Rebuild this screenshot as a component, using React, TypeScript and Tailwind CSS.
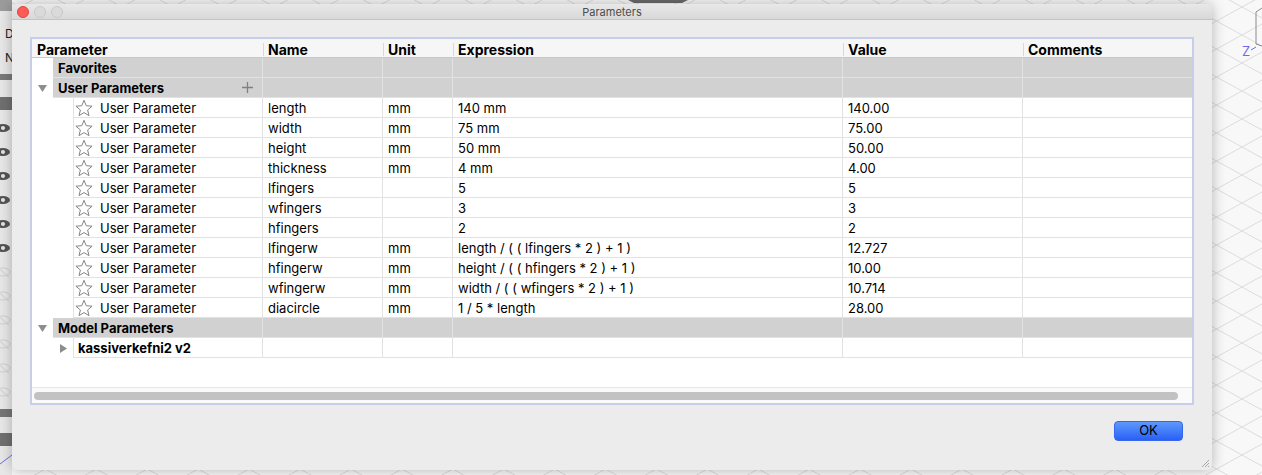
import React from 'react';

const params = [
  ['length', 'mm', '140 mm', '140.00'],
  ['width', 'mm', '75 mm', '75.00'],
  ['height', 'mm', '50 mm', '50.00'],
  ['thickness', 'mm', '4 mm', '4.00'],
  ['lfingers', '', '5', '5'],
  ['wfingers', '', '3', '3'],
  ['hfingers', '', '2', '2'],
  ['lfingerw', 'mm', 'length / ( ( lfingers * 2 ) + 1 )', '12.727'],
  ['hfingerw', 'mm', 'height / ( ( hfingers * 2 ) + 1 )', '10.00'],
  ['wfingerw', 'mm', 'width / ( ( wfingers * 2 ) + 1 )', '10.714'],
  ['diacircle', 'mm', '1 / 5 * length', '28.00'],
];

const headers: [string, string][] = [
  ['Name', 'w-[120px]'],
  ['Unit', 'w-[70px]'],
  ['Expression', 'w-[390px]'],
  ['Value', 'w-[180px]'],
];

const cell = 'flex h-full shrink-0 items-center overflow-hidden whitespace-nowrap border-r border-[#e2e2e2] pt-[2px]';

const Down = () => (
  <svg width="9" height="7" viewBox="0 0 9 7">
    <polygon points="0,0 9,0 4.5,7" fill="#8d8d8d" />
  </svg>
);

const Right = () => (
  <svg width="7" height="9" viewBox="0 0 7 9">
    <polygon points="0,0 7,4.5 0,9" fill="#8d8d8d" />
  </svg>
);

const Star = () => (
  <svg width="18" height="18" viewBox="0 0 18 18" className="mt-[-2px] shrink-0">
    <polygon
      points="9,1.3 11.23,6.73 17.08,7.17 12.61,10.97 14,16.68 9,13.6 4,16.68 5.39,10.97 0.92,7.17 6.77,6.73"
      fill="none"
      stroke="#868686"
      strokeWidth="1"
      strokeLinejoin="round"
    />
  </svg>
);

const Tail = ({ name = '', unit = '', expr = '', value = '' }) => (
  <>
    <div className={`${cell} w-[120px] pl-[5px]`}>{name}</div>
    <div className={`${cell} w-[70px] pl-[5px]`}>{unit}</div>
    <div className={`${cell} w-[390px] pl-[5px]`}>{expr}</div>
    <div className={`${cell} w-[180px] pl-[5px]`}>{value}</div>
    <div className="flex-1" />
  </>
);

const GroupRow = ({ label, open, plus }: { label: string; open?: boolean; plus?: boolean }) => (
  <div className="flex h-5">
    <div className="flex w-[21px] shrink-0 items-center justify-center">{open && <Down />}</div>
    <div className="flex flex-1 border-b border-[#e2e2e2] bg-[#d1d1d1] font-bold">
      <div className={`${cell} w-[210px] justify-between pl-[5px] pr-[9px]`}>
        <span>{label}</span>
        {plus && (
          <svg width="11" height="11" viewBox="0 0 11 11" className="mt-[-2px]">
            <path d="M5.5 0v11M0 5.5h11" stroke="#808080" strokeWidth="1.3" />
          </svg>
        )}
      </div>
      <Tail />
    </div>
  </div>
);

const Desktop = () => {
  const lines = Array.from({ length: 90 }, (_, i) => -900 + i * 28);
  return (
    <svg className="absolute inset-0" width="1262" height="475">
      <rect width="1262" height="475" fill="#f8f8f8" />
      {lines.map((c) => (
        <g key={c} stroke="#dcdcdc" strokeWidth="1">
          <line x1="0" y1={c} x2="1262" y2={c + 694} />
          <line x1="0" y1={c + 694} x2="1262" y2={c} />
        </g>
      ))}
      <path d="M628 0h60l-6 3h-48z" fill="#6a6a6a" />
      <path d="M1256 12l6-4M1256 12v32l6 2" stroke="#8a8a8a" fill="none" />
      <text x="1242" y="56" fill="#6b6bf2" fontSize="13" fontFamily="Inter, sans-serif">Z</text>
      <path d="M1251 50l5-3" stroke="#6b6bf2" />
      {/* app side strip */}
      <rect x="0" y="0" width="12" height="475" fill="#e8e8e8" />
      <rect x="0" y="0" width="12" height="11" fill="#9c9c9c" />
      <text x="5" y="38" fontSize="12" fontFamily="Inter, sans-serif" fill="#222">D</text>
      <text x="5" y="62" fontSize="12" fontFamily="Inter, sans-serif" fill="#222">N</text>
      <rect x="0" y="74" width="12" height="6" fill="#7a7a7a" />
      <rect x="0" y="97" width="12" height="13" fill="#707070" />
      {[128, 152, 176, 200, 224, 248].map((y) => (
        <g key={y}>
          <ellipse cx="3" cy={y} rx="7" ry="4" fill="#555" />
          <circle cx="3" cy={y} r="2" fill="#e8e8e8" />
        </g>
      ))}
      {[272, 296, 320, 344, 368, 392].map((y) => (
        <g key={y} stroke="#cfcfcf" fill="none">
          <ellipse cx="3" cy={y} rx="7" ry="4" />
          <line x1="-3" y1={y - 5} x2="9" y2={y + 5} />
        </g>
      ))}
      <rect x="0" y="409" width="12" height="8" fill="#777" />
      <rect x="0" y="433" width="12" height="13" fill="#707070" />
      <line x1="0" y1="464" x2="12" y2="455" stroke="#6b6bf2" />
    </svg>
  );
};

export default function App() {
  return (
    <div className="relative h-[475px] w-[1262px] overflow-hidden font-['Inter','Liberation_Sans',sans-serif] text-[13px] text-black">
      <Desktop />

      <div className="absolute left-[12px] top-[4px] flex h-[466px] w-[1200px] flex-col overflow-hidden rounded-[5px] bg-[#ececec] shadow-[0_0_14px_rgba(0,0,0,0.28)]">
        {/* title bar */}
        <div className="relative flex h-[16px] shrink-0 items-center justify-center border-b border-[#c3c3c3] bg-gradient-to-b from-[#e8e8e8] to-[#d8d8d8]">
          <div className="absolute left-[5px] top-[2px] flex gap-[5px]">
            <span className="h-[12px] w-[12px] rounded-full border border-[#e1423c] bg-[#fd5b55]" />
            <span className="h-[12px] w-[12px] rounded-full border border-[#c8c8c8] bg-[#dadada]" />
            <span className="h-[12px] w-[12px] rounded-full border border-[#c8c8c8] bg-[#dadada]" />
          </div>
          <span className="pt-[2px] text-[11px] leading-none text-[#4d4d4d]">Parameters</span>
        </div>

        <div className="flex flex-1 flex-col px-[18px] pt-[17px]">
          {/* table frame */}
          <div className="flex h-[368px] flex-col border-2 border-[#c6cee9] bg-white">
            <div className="flex h-[19px] shrink-0 border-b border-[#c9c9c9] bg-[#f6f6f6] pt-[2px] text-[14px] font-bold">
              <div className="flex w-[231px] shrink-0 items-center pl-[5px]">Parameter</div>
              {headers.map(([h, w]) => (
                <div key={h} className={`flex ${w} shrink-0 items-center`}>
                  <span className="h-[13px] w-px bg-[#d9d9d9]" />
                  <span className="pl-[4px]">{h}</span>
                </div>
              ))}
              <div className="flex flex-1 items-center">
                <span className="h-[13px] w-px bg-[#d9d9d9]" />
                <span className="pl-[4px]">Comments</span>
              </div>
            </div>

            <GroupRow label="Favorites" />
            <GroupRow label="User Parameters" open plus />
            {params.map(([name, unit, expr, value]) => (
              <div key={name} className="flex h-5">
                <div className="w-[41px] shrink-0" />
                <div className="flex flex-1 border-b border-l border-[#e2e2e2]">
                  <div className={`${cell} w-[189px] gap-[7px] pl-[1px]`}>
                    <Star />
                    <span>User Parameter</span>
                  </div>
                  <Tail name={name} unit={unit} expr={expr} value={value} />
                </div>
              </div>
            ))}
            <GroupRow label="Model Parameters" open />
            <div className="flex h-5">
              <div className="flex w-[41px] shrink-0 items-center pl-[28px]">
                <Right />
              </div>
              <div className="flex flex-1 border-b border-l border-[#e2e2e2]">
                <div className={`${cell} w-[189px] pl-[4px] font-bold`}>kassiverkefni2 v2</div>
                <Tail />
              </div>
            </div>

            <div className="flex-1" />
            <div className="flex h-[16px] shrink-0 items-center border-t border-[#e6e6e6] bg-[#fafafa] pl-[2px] pr-[14px]">
              <div className="h-[8px] flex-1 rounded-full bg-[#c2c2c2]" />
            </div>
          </div>

          <div className="mt-[16px] flex justify-end pr-[11px]">
            <button className="flex h-[20px] w-[69px] items-center justify-center rounded-[4px] border border-[#3467ee] bg-gradient-to-b from-[#5f98fb] to-[#2a5ff5] text-[13px] text-black">
              OK
            </button>
          </div>
        </div>

        <svg className="absolute bottom-[2px] right-[2px]" width="10" height="10" viewBox="0 0 10 10">
          <path d="M9 2L2 9M9 5L5 9M9 8L8 9" stroke="#a8a8a8" strokeWidth="1" />
        </svg>
      </div>
    </div>
  );
}
